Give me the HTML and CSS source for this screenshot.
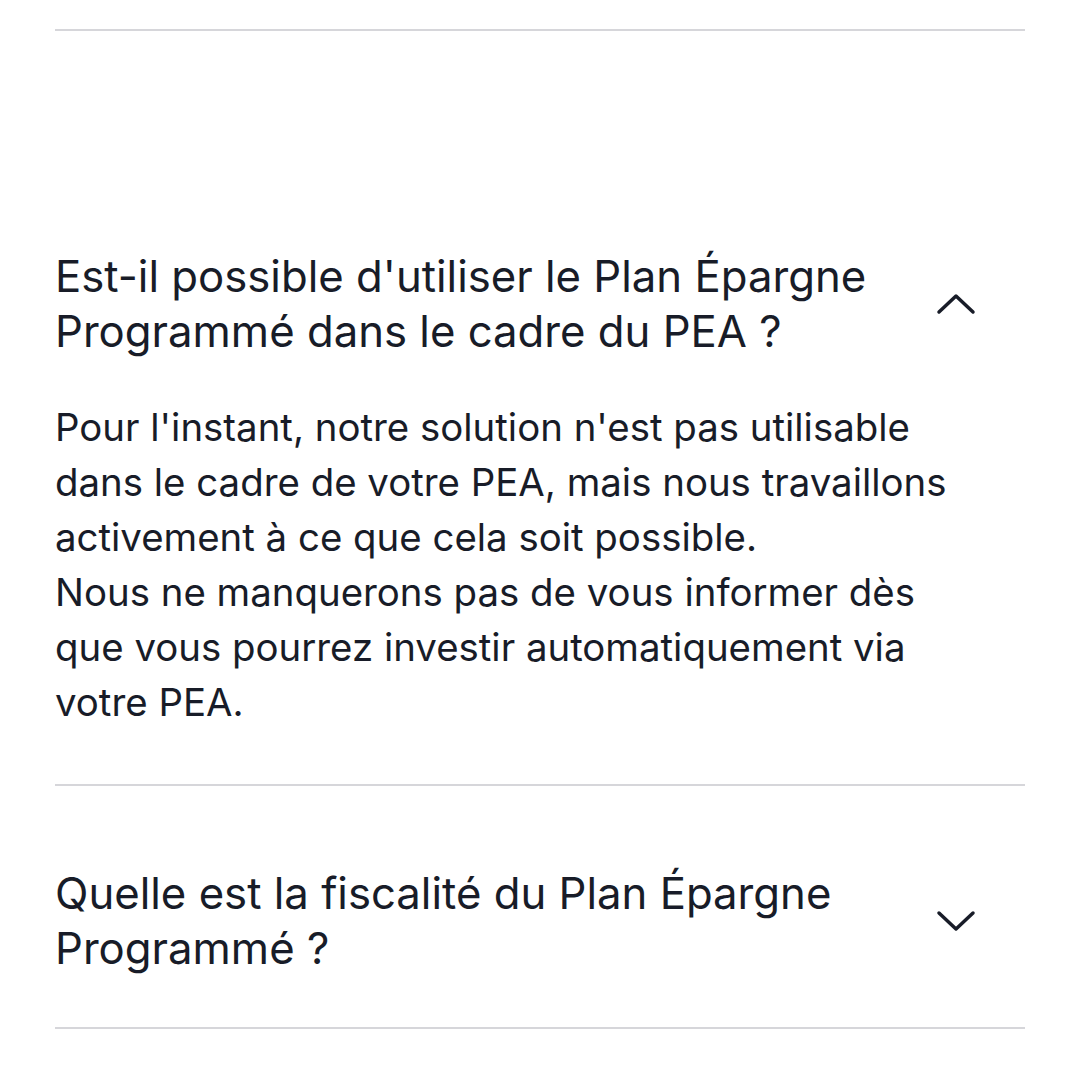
FILE: index.html
```html
<!DOCTYPE html>
<html lang="fr">
<head>
    <meta charset="UTF-8">
    <meta name="viewport" content="width=device-width, initial-scale=1.0">
    <title>FAQ - Plan Épargne Programmé</title>
    <link rel="stylesheet" href="styles.css">
</head>
<body>
    <div class="faq">
        <div class="faq-top"></div>

        <!-- Question ouverte -->
        <div class="faq-item first open">
            <div class="faq-question">
                <p class="question-text">Est-il possible d'utiliser le Plan Épargne Programmé dans le cadre du PEA ?</p>
                <svg class="chevron" viewBox="0 0 40 24" width="40" height="24">
                    <polyline points="3,20 20,4 37,20" />
                </svg>
            </div>
            <div class="faq-answer">
                <p>Pour l'instant, notre solution n'est pas utilisable dans le cadre de votre PEA, mais nous travaillons activement à ce que cela soit possible.<br>Nous ne manquerons pas de vous informer dès que vous pourrez investir automatiquement via votre PEA.</p>
            </div>
        </div>

        <!-- Question fermée -->
        <div class="faq-item">
            <div class="faq-question">
                <p class="question-text">Quelle est la fiscalité du Plan Épargne Programmé ?</p>
                <svg class="chevron" viewBox="0 0 40 24" width="40" height="24">
                    <polyline points="3,4 20,20 37,4" />
                </svg>
            </div>
        </div>
    </div>
</body>
</html>
```

FILE: styles.css
```css
body {
    margin: 0;
    background: #ffffff;
    font-family: Inter, "Noto Sans", sans-serif;
    color: #181c28;
}
.faq {
    padding: 29px 55px 0 55px;
}
.faq-top {
    border-top: 2px solid #d6d6da;
}
.faq-item {
    border-bottom: 2px solid #d6d6da;
    padding: 80px 0 51px;
}
.faq-item.first {
    padding-top: 218px;
    padding-bottom: 54px;
}
.faq-question {
    display: flex;
    align-items: center;
    justify-content: space-between;
}
.question-text {
    margin: 0;
    width: 870px;
    font-size: 43.7px;
    line-height: 55px;
}
.chevron {
    margin-right: 49px;
}
.chevron polyline {
    fill: none;
    stroke: #181c28;
    stroke-width: 3.5;
    stroke-linecap: round;
    stroke-linejoin: round;
}
.faq-answer {
    margin-top: 41px;
}
.faq-answer p {
    margin: 0;
    max-width: 905px;
    font-size: 38.4px;
    line-height: 55px;
}
```
